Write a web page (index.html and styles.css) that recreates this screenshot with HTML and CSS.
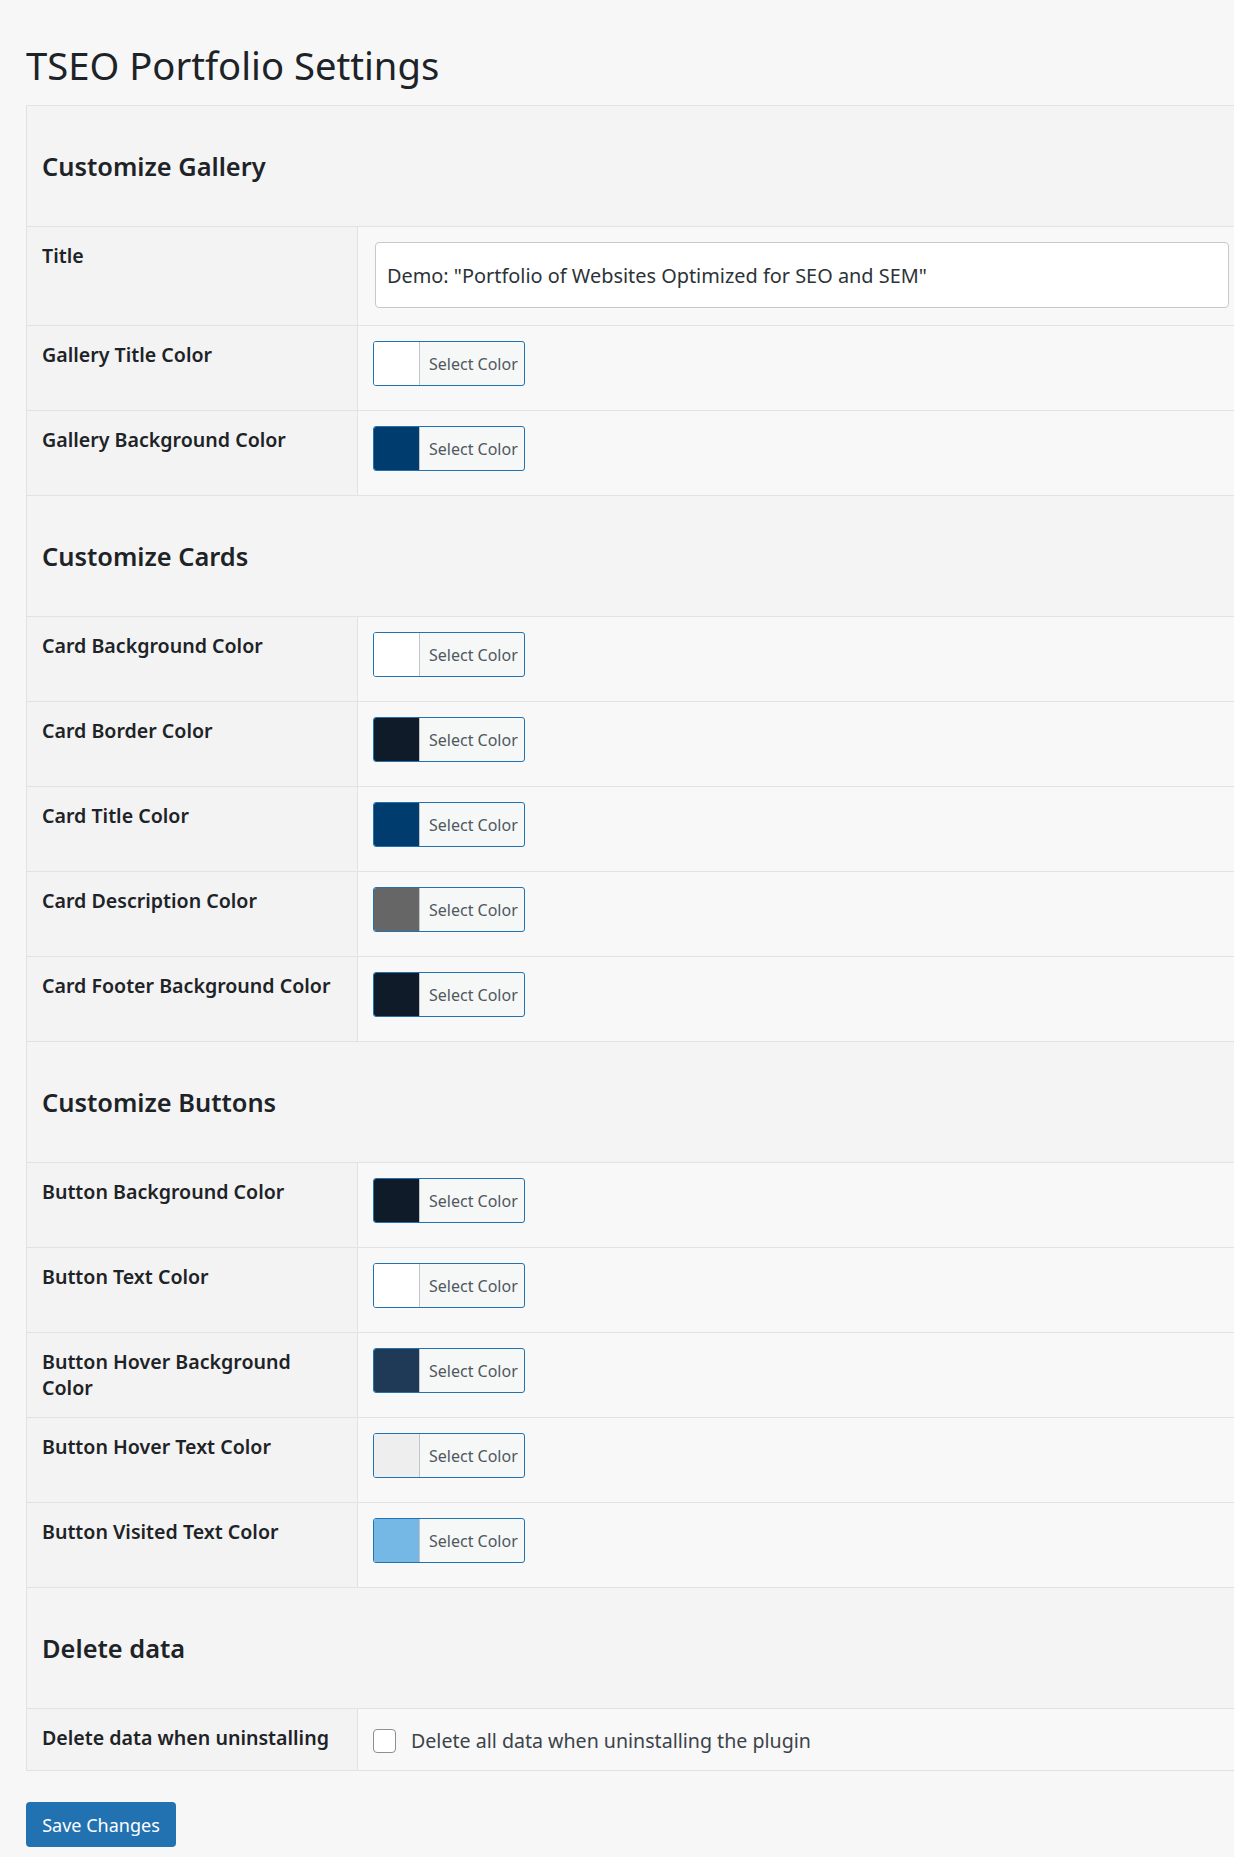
FILE: index.html
```html
<!DOCTYPE html>
<html lang="en">
<head>
<meta charset="utf-8">
<title>TSEO Portfolio Settings</title>
<link rel="stylesheet" href="styles.css">
</head>
<body>
<div class="wrap">
  <h1 class="page-title">TSEO Portfolio Settings</h1>
  <form class="settings-form">
    <table class="form-table">
      <tbody>
        <tr class="section"><th colspan="2"><h2>Customize Gallery</h2></th></tr>
        <tr>
          <th class="label">Title</th>
          <td class="field field-title"><input class="text-input" type="text" value='Demo: "Portfolio of Websites Optimized for SEO and SEM"'></td>
        </tr>
        <tr>
          <th class="label">Gallery Title Color</th>
          <td class="field"><button type="button" class="color-btn"><span class="swatch" style="background:#ffffff"></span><span class="color-text">Select Color</span></button></td>
        </tr>
        <tr>
          <th class="label">Gallery Background Color</th>
          <td class="field"><button type="button" class="color-btn"><span class="swatch" style="background:#003d6e"></span><span class="color-text">Select Color</span></button></td>
        </tr>

        <tr class="section"><th colspan="2"><h2>Customize Cards</h2></th></tr>
        <tr>
          <th class="label">Card Background Color</th>
          <td class="field"><button type="button" class="color-btn"><span class="swatch" style="background:#ffffff"></span><span class="color-text">Select Color</span></button></td>
        </tr>
        <tr>
          <th class="label">Card Border Color</th>
          <td class="field"><button type="button" class="color-btn"><span class="swatch" style="background:#101b2a"></span><span class="color-text">Select Color</span></button></td>
        </tr>
        <tr>
          <th class="label">Card Title Color</th>
          <td class="field"><button type="button" class="color-btn"><span class="swatch" style="background:#003d6e"></span><span class="color-text">Select Color</span></button></td>
        </tr>
        <tr>
          <th class="label">Card Description Color</th>
          <td class="field"><button type="button" class="color-btn"><span class="swatch" style="background:#666666"></span><span class="color-text">Select Color</span></button></td>
        </tr>
        <tr>
          <th class="label">Card Footer Background Color</th>
          <td class="field"><button type="button" class="color-btn"><span class="swatch" style="background:#101b2a"></span><span class="color-text">Select Color</span></button></td>
        </tr>

        <tr class="section"><th colspan="2"><h2>Customize Buttons</h2></th></tr>
        <tr>
          <th class="label">Button Background Color</th>
          <td class="field"><button type="button" class="color-btn"><span class="swatch" style="background:#101b2a"></span><span class="color-text">Select Color</span></button></td>
        </tr>
        <tr>
          <th class="label">Button Text Color</th>
          <td class="field"><button type="button" class="color-btn"><span class="swatch" style="background:#ffffff"></span><span class="color-text">Select Color</span></button></td>
        </tr>
        <tr>
          <th class="label">Button Hover Background Color</th>
          <td class="field"><button type="button" class="color-btn"><span class="swatch" style="background:#1f3a56"></span><span class="color-text">Select Color</span></button></td>
        </tr>
        <tr>
          <th class="label">Button Hover Text Color</th>
          <td class="field"><button type="button" class="color-btn"><span class="swatch" style="background:#eeeeee"></span><span class="color-text">Select Color</span></button></td>
        </tr>
        <tr>
          <th class="label">Button Visited Text Color</th>
          <td class="field"><button type="button" class="color-btn"><span class="swatch" style="background:#75b8e6"></span><span class="color-text">Select Color</span></button></td>
        </tr>

        <tr class="section"><th colspan="2"><h2>Delete data</h2></th></tr>
        <tr class="row-delete">
          <th class="label">Delete data when uninstalling</th>
          <td class="field field-check"><label class="check-label"><input type="checkbox" class="checkbox"><span>Delete all data when uninstalling the plugin</span></label></td>
        </tr>
      </tbody>
    </table>
    <div class="submit-row"><button type="submit" class="save-btn">Save Changes</button></div>
  </form>
</div>
</body>
</html>
```

FILE: styles.css
```css
html, body {
  margin: 0;
  padding: 0;
  background: #f7f7f7;
  overflow-x: hidden;
}

body {
  font-family: "Noto Sans", "Open Sans", sans-serif;
  color: #1d2327;
}

.wrap {
  padding-left: 26px;
}

.page-title {
  margin: 0 0 15px;
  padding-top: 41px;
  font-size: 38.2px;
  line-height: 49px;
  font-weight: 400;
  color: #1d2327;
}

.settings-form {
  margin: 0;
}

.form-table {
  border-collapse: collapse;
  width: 1240px;
  border: 1px solid #e2e2e2;
}

.form-table tr {
  border-bottom: 1px solid #e2e2e2;
}

.section th {
  height: 120px;
  padding: 0 15px;
  background: #f4f4f4;
  text-align: left;
  vertical-align: middle;
}

.section h2 {
  margin: 0;
  font-size: 25.4px;
  line-height: 34px;
  font-weight: 600;
  color: #1d2327;
}

.label {
  width: 300px;
  padding: 16px 15px 0;
  background: #f3f3f3;
  border-right: 1px solid #e2e2e2;
  text-align: left;
  vertical-align: top;
  font-size: 19.6px;
  line-height: 26px;
  font-weight: 600;
  color: #1d2327;
}

.field {
  padding: 15px 15px 24px;
  background: #f8f8f8;
  vertical-align: top;
}

.field-title {
  padding-bottom: 17px;
}

.text-input {
  display: block;
  box-sizing: border-box;
  width: 854px;
  height: 66px;
  margin: 0 0 0 2px;
  padding: 0 11px;
  border: 1px solid #c8c8c8;
  border-radius: 4px;
  background: #ffffff;
  font-family: inherit;
  font-size: 19.9px;
  color: #2c3338;
}

.color-btn {
  display: flex;
  align-items: stretch;
  box-sizing: border-box;
  width: 152px;
  height: 45px;
  margin: 0;
  padding: 0;
  border: 1px solid #2271b1;
  border-radius: 3px;
  overflow: hidden;
  background: #f6f7f7;
  font-family: inherit;
  cursor: pointer;
}

.swatch {
  width: 45px;
  border-right: 1px solid #c3c4c7;
}

.color-text {
  display: flex;
  align-items: center;
  padding-left: 9px;
  font-size: 16px;
  color: #50575e;
}

.row-delete .label {
  padding-top: 16px;
}

.field-check {
  padding: 20px 15px 17px;
}

.check-label {
  display: flex;
  align-items: center;
  gap: 15px;
  font-size: 19.6px;
  line-height: 24px;
  color: #3c434a;
}

.checkbox {
  appearance: none;
  -webkit-appearance: none;
  box-sizing: border-box;
  width: 23px;
  height: 24px;
  margin: 0;
  border: 1px solid #8c8f94;
  border-radius: 4px;
  background: #ffffff;
}

.submit-row {
  padding-top: 31px;
}

.save-btn {
  box-sizing: border-box;
  width: 150px;
  height: 45px;
  margin: 0;
  padding: 0;
  border: 0;
  border-radius: 4px;
  background: #2271b1;
  color: #ffffff;
  font-family: inherit;
  font-size: 18px;
  cursor: pointer;
}
```
